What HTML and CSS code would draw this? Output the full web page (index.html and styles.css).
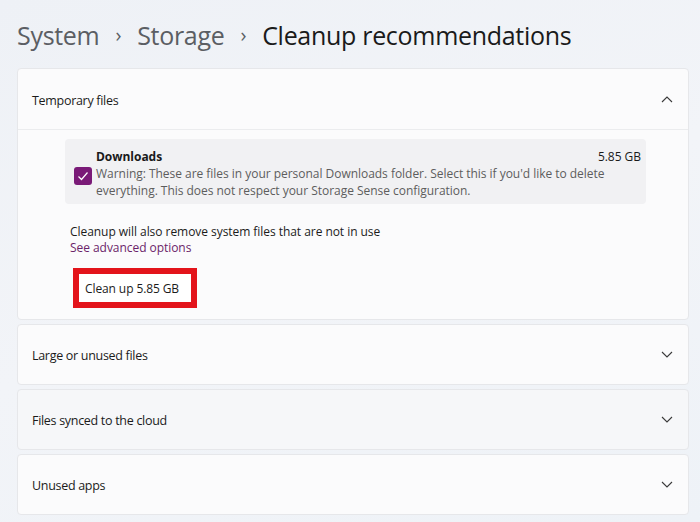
FILE: index.html
```html
<!DOCTYPE html>
<html lang="en">
<head>
<meta charset="utf-8">
<title>Cleanup recommendations</title>
<link rel="stylesheet" href="styles.css">
</head>
<body>
<div class="page">
  <h1 class="crumbs">
    <span class="crumb">System</span>
    <span class="sep">›</span>
    <span class="crumb">Storage</span>
    <span class="sep">›</span>
    <span class="crumb current">Cleanup recommendations</span>
  </h1>

  <div class="cards">
    <section class="card open">
      <div class="card-head">
        <span class="card-title">Temporary files</span>
        <svg class="chev" viewBox="0 0 12 7" width="12" height="7"><path d="M1 6 L6 1 L11 6" fill="none" stroke="#3a3a3a" stroke-width="1.1"/></svg>
      </div>
      <div class="card-body">
        <div class="item">
          <span class="check"><svg viewBox="0 0 18 18" width="18" height="18"><path d="M4.5 9.5 L7.5 12.5 L13.5 5.5" fill="none" stroke="#fff" stroke-width="1.2"/></svg></span>
          <div class="item-text">
            <div class="item-top"><span class="item-name">Downloads</span><span class="item-size">5.85 GB</span></div>
            <div class="item-desc">Warning: These are files in your personal Downloads folder. Select this if you'd like to delete everything. This does not respect your Storage Sense configuration.</div>
          </div>
        </div>
        <p class="note">Cleanup will also remove system files that are not in use</p>
        <a class="link" href="#">See advanced options</a>
        <div class="highlight"><button class="btn">Clean up 5.85 GB</button></div>
      </div>
    </section>

    <section class="card">
      <div class="card-head">
        <span class="card-title">Large or unused files</span>
        <svg class="chev" viewBox="0 0 12 7" width="12" height="7"><path d="M1 1 L6 6 L11 1" fill="none" stroke="#3a3a3a" stroke-width="1.1"/></svg>
      </div>
    </section>

    <section class="card hover">
      <div class="card-head">
        <span class="card-title">Files synced to the cloud</span>
        <svg class="chev" viewBox="0 0 12 7" width="12" height="7"><path d="M1 1 L6 6 L11 1" fill="none" stroke="#3a3a3a" stroke-width="1.1"/></svg>
      </div>
    </section>

    <section class="card">
      <div class="card-head">
        <span class="card-title">Unused apps</span>
        <svg class="chev" viewBox="0 0 12 7" width="12" height="7"><path d="M1 1 L6 6 L11 1" fill="none" stroke="#3a3a3a" stroke-width="1.1"/></svg>
      </div>
    </section>
  </div>
</div>
</body>
</html>
```

FILE: styles.css
```css
html, body {
  margin: 0;
  padding: 0;
}
body {
  width: 700px;
  height: 522px;
  overflow: hidden;
  background: linear-gradient(160deg, #eef1f6 0%, #f2f4f8 50%, #eef2f7 100%);
  font-family: "Open Sans", "Noto Sans", "Liberation Sans", sans-serif;
  color: #1b1b1b;
}
.page {
  padding: 0 11px 0 17px;
}
.crumbs {
  margin: 0;
  height: 68px;
  display: flex;
  align-items: center;
  font-weight: 400;
  font-size: 25px;
  letter-spacing: -0.3px;
  padding-top: 2px;
  box-sizing: border-box;
}
.crumb {
  color: #5b5e63;
}
.crumb.current {
  color: #1a1a1a;
}
.sep {
  color: #5b5e63;
  font-size: 20px;
  padding: 0 16px 0 16px;
  position: relative;
  top: -1px;
}
.cards {
  display: flex;
  flex-direction: column;
  gap: 4px;
}
.card {
  background: #fbfbfc;
  border: 1px solid #e6e7ea;
  border-radius: 4px;
}
.card.hover {
  background: #f6f7f9;
}
.card-head {
  height: 59px;
  display: flex;
  align-items: center;
  justify-content: space-between;
  padding: 0 15px 0 14px;
}
.card.open .card-head {
  height: 60px;
  border-bottom: 1px solid #ebecee;
}
.card-title {
  font-size: 12.5px;
  letter-spacing: -0.3px;
  color: #1b1b1b;
  position: relative;
  top: 1px;
}
.chev {
  display: block;
}
.card-body {
  padding: 9px 42px 11px 47px;
}
.item {
  background: #f1f1f3;
  border-radius: 4px;
  display: flex;
  align-items: center;
  padding: 9px 5px 5px 9px;
  height: 65px;
  box-sizing: border-box;
}
.check {
  width: 18px;
  height: 18px;
  border-radius: 3px;
  background: #7a1a77;
  flex: none;
  margin-right: 4px;
  margin-top: 4px;
}
.check svg {
  display: block;
}
.item-text {
  flex: 1;
  font-size: 12px;
  line-height: 17px;
  letter-spacing: -0.03px;
}
.item-top {
  display: flex;
  justify-content: space-between;
}
.item-name {
  font-weight: 700;
  color: #1a1a1a;
}
.item-size {
  color: #1a1a1a;
}
.item-desc {
  color: #5d5d5d;
}
.note {
  margin: 20px 0 0 5px;
  font-size: 12px;
  line-height: 16px;
  letter-spacing: -0.05px;
  color: #1b1b1b;
}
.link {
  display: block;
  margin-left: 5px;
  font-size: 12px;
  line-height: 16px;
  letter-spacing: -0.05px;
  color: #6b1f6a;
  text-decoration: none;
}
.highlight {
  display: inline-block;
  margin: 12px 0 0 8px;
  border: 6px solid #e3141b;
  background: #fff;
}
.btn {
  display: block;
  font-family: inherit;
  font-size: 12px;
  letter-spacing: -0.1px;
  color: #1b1b1b;
  background: #fff;
  border: none;
  height: 28px;
  width: 112px;
  padding: 0 0 0 6px;
  text-align: left;
}
```
